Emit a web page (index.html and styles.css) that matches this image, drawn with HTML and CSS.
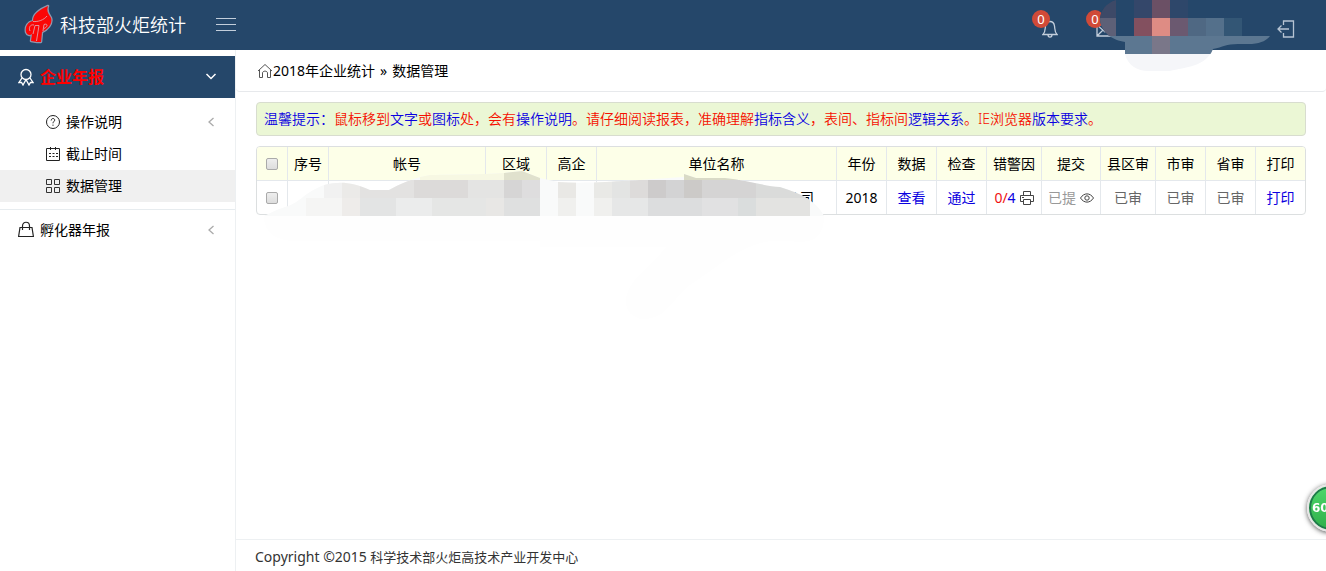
FILE: index.html
```html
<!DOCTYPE html>
<html lang="zh-CN">
<head>
<meta charset="utf-8">
<title>科技部火炬统计</title>
<link rel="stylesheet" href="styles.css">
</head>
<body>
<header class="topbar">
  <svg class="logo" viewBox="0 0 30 42" aria-hidden="true">
    <path fill="none" stroke="#8f98ae" stroke-width="2.500" stroke-linejoin="round" d="M24 2C15 6 9 10 9 17C4 18 1 22 2 28C3 31 6 32 8 30L7 37L13 38L17 38L18 28C23 26 29 20 27 14C25 10 22 8 24 2Z"/>
    <path fill="#fb0606" d="M24 2C15 6 9 10 9 17C4 18 1 22 2 28C3 31 6 32 8 30L7 37L13 38L17 38L18 28C23 26 29 20 27 14C25 10 22 8 24 2Z"/>
    <path fill="none" stroke="#dfa0aa" stroke-width=".9" d="M9 17.500C14 18 20 16 23 12M10 21C6 20 4.500 24 6 27M12.500 37L15 21.500H11L9 30M19 27L20 20.500C24 19 24 23 20 24.500"/>
  </svg>
  <h1 class="brand">科技部火炬统计</h1>
  <button class="icon-btn menu-btn" aria-label="菜单">
    <svg width="20" height="14" viewBox="0 0 20 14"><path d="M0 .5H20M0 6.500H20M0 12.500H20" stroke="#c3cedb" fill="none"/></svg>
  </button>
  <nav class="tools">
    <button class="icon-btn tool" aria-label="通知">
      <svg width="16" height="18" viewBox="0 0 16 18" fill="none" stroke="#c3cedb" stroke-width="1.300"><path d="M1 14.500C3.500 12 3 9 3.500 6C4 2.500 6 1.500 8 1.500S12 2.500 12.500 6C13 9 12.500 12 15 14.500ZM6 14.500C6 18 10 18 10 14.500"/></svg>
      <span class="badge">0</span>
    </button>
    <button class="icon-btn tool" aria-label="邮件">
      <svg width="18" height="18" viewBox="0 0 18 18" fill="none" stroke="#c3cedb" stroke-width="1.300"><path d="M1 5H17V16H1ZM1 5L9 12L17 5M1 16L7 10M17 16L11 10"/></svg>
      <span class="badge">0</span>
    </button>
    <button class="icon-btn exit" aria-label="退出">
      <svg width="18" height="18" viewBox="0 0 18 18" fill="none" stroke="#b7c4d3" stroke-width="1.300"><path d="M6.500 5V1H16.500V17H6.500V13M12 9H1M4.500 5.500L1 9L4.500 12.500"/></svg>
    </button>
  </nav>
  <svg class="mask-top" width="172" height="72" viewBox="1100 0 172 72" aria-hidden="true">
    <defs><clipPath id="c1"><path d="M1116 0C1106 3 1100 11 1100 20C1102 34 1113 40 1125 42V54C1128 66 1138 71 1148 71H1170C1185 67 1206 67 1213 49C1223 47 1226 44 1238 44H1252C1262 43 1267 40 1270 36H1242V0Z"/></clipPath></defs>
    <g clip-path="url(#c1)">
      <path fill="#25476a" d="M1100 0h172v36h-172z"/><path fill="#5c7791" d="M1100 36h172v18h-172z"/><path fill="#f5f6f9" d="M1100 54h172v18h-172z"/>
      <path fill="#3d4967" d="M1098 0h18v18h-18z"/><path fill="#34476a" d="M1134 0h18v18h-18z"/><path fill="#6b5065" d="M1152 0h18v18h-18z"/><path fill="#2e476a" d="M1170 0h18v18h-18z"/>
      <path fill="#5d6077" d="M1098 18h18v18h-18z"/><path fill="#83505f" d="M1134 18h18v18h-18z"/><path fill="#de8c84" d="M1152 18h18v18h-18z"/><path fill="#6b5970" d="M1170 18h18v18h-18z"/><path fill="#4f6883" d="M1188 18h36v18h-36z"/><path fill="#54708b" d="M1206 18h18v18h-18z"/><path fill="#335675" d="M1224 18h18v18h-18z"/>
      <path fill="#7a7789" d="M1152 36h18v18h-18z"/>
    </g>
  </svg>
</header>
<div class="shell">
  <aside class="sidebar">
    <a class="group active" href="#">
      <svg width="16" height="18" viewBox="0 0 16 18" fill="none" stroke="#fff" stroke-width="1.300"><circle cx="8" cy="6.500" r="5"/><path d="M4 10L1 14.500H3.500L5 17L7.500 12.500H8.500L11 17L12.500 14.500H15L12 10"/></svg>
      <span class="grow">企业年报</span>
      <svg width="12" height="12" viewBox="0 0 12 12" fill="none" stroke="#fff" stroke-width="1.500"><path d="M1.500 3L6 7.500L10.500 3"/></svg>
    </a>
    <ul class="submenu">
      <li><a class="item" href="#">
        <svg width="14" height="14" viewBox="0 0 14 14" fill="none" stroke="#222"><circle cx="7" cy="7" r="6.500"/><path d="M5.200 5.500C5.200 2.800 8.800 3 8.700 5.200C8.600 6.500 7 6.500 7 8.300M7 9.600V10.800"/></svg>
        <span class="grow">操作说明</span>
        <svg width="12" height="12" viewBox="0 0 12 12" fill="none" stroke="#aaa" stroke-width="1.300"><path d="M8.500 2L4 6L8.500 10"/></svg>
      </a></li>
      <li><a class="item" href="#">
        <svg width="14" height="14" viewBox="0 0 14 14" fill="none" stroke="#222"><path d="M.5 1.500H13.500V13.500H.5ZM4.500 0V3M9.500 0V3"/><path stroke-dasharray="2 1.500" d="M3 6.500H12M3 9.500H12"/></svg>
        <span class="grow">截止时间</span>
      </a></li>
      <li><a class="item current" href="#">
        <svg width="14" height="14" viewBox="0 0 14 14" fill="none" stroke="#333"><path d="M.5.500H5.500V5.500H.5ZM8.500.500H13.500V5.500H8.500ZM.5 8.500H5.500V13.500H.5ZM8.500 8.500H13.500V13.500H8.500Z"/></svg>
        <span class="grow">数据管理</span>
      </a></li>
    </ul>
    <a class="group" href="#">
      <svg width="16" height="18" viewBox="0 0 16 18" fill="none" stroke="#222" stroke-width="1.200"><path d="M2 6.500H14L15.400 15.500H.6ZM4.500 9V5C4.500 0 11.500 0 11.500 5V9"/></svg>
      <span class="grow">孵化器年报</span>
      <svg width="12" height="12" viewBox="0 0 12 12" fill="none" stroke="#aaa" stroke-width="1.300"><path d="M8.500 2L4 6L8.500 10"/></svg>
    </a>
  </aside>
  <div class="page">
    <nav class="crumbs">
      <svg width="16" height="16" viewBox="0 0 16 16" fill="none" stroke="#555"><path d="M1 8L8 1.500L15 8M2.500 7V14.500H5.500V10C5.500 7.500 10.500 7.500 10.500 10V14.500H13.500V7"/></svg>
      <span>2018年企业统计</span><span class="sep">»</span><span>数据管理</span>
    </nav>
    <main class="content">
      <p class="notice"><b>温馨提示：</b>鼠标移到<b>文字</b>或<b>图标</b>处，会有<b>操作说明</b>。请仔细阅读报表，准确理解<b>指标含义</b>，表间、指标间<b>逻辑关系</b>。IE浏览器<b>版本要求</b>。</p>
      <div class="table-wrap">
        <table class="grid">
          <colgroup><col class="w31"><col class="w41"><col class="w157"><col class="w61"><col class="w50"><col><col class="w50"><col class="w50"><col class="w50"><col class="w55"><col class="w59"><col class="w55"><col class="w50"><col class="w50"><col class="w49"></colgroup>
          <thead><tr><th><input class="tick" type="checkbox" aria-label="全选"></th><th>序号</th><th>帐号</th><th>区域</th><th>高企</th><th>单位名称</th><th>年份</th><th>数据</th><th>检查</th><th>错警因</th><th>提交</th><th>县区审</th><th>市审</th><th>省审</th><th>打印</th></tr></thead>
          <tbody><tr><td><input class="tick" type="checkbox" aria-label="选择"></td><td></td><td></td><td></td><td></td><td class="company">公司</td><td>2018</td><td><a href="#">查看</a></td><td><a href="#">通过</a></td>
            <td><span class="pair"><span><span class="err">0/</span><a href="#">4</a></span>
              <svg width="14" height="14" viewBox="0 0 14 14" fill="none" stroke="#444"><path d="M3.500 4.500V.5H10.500V4.500M3.500 10.500H.5V4.500H13.500V10.500H10.500M3.500 8.500H10.500V13.500H3.500ZM2 6.500H4"/></svg></span></td>
            <td><span class="pair soft">已提
              <svg width="14" height="14" viewBox="0 0 14 14" fill="none" stroke="#444"><path d="M.5 7C4 1.500 10 1.500 13.500 7C10 12.500 4 12.500.5 7Z"/><circle cx="7" cy="7" r="2.200"/></svg></span></td>
            <td class="done">已审</td><td class="done">已审</td><td class="done">已审</td><td><a href="#">打印</a></td></tr></tbody>
        </table>
        <svg class="mask-row" width="570" height="150" viewBox="260 170 570 150" aria-hidden="true">
          <path fill="#fefefe" d="M264 216H824C824 240 810 244 790 241C750 236 725 262 690 285C670 302 665 320 642 319C620 315 620 290 645 270C655 260 664 250 666 247H540V241H300Q264 242 264 216Z"/>
          <defs><clipPath id="c2"><path d="M264 216Q280 208 288 206C300 202 304 193 324 185C340 181 352 182 370 190H389C400 184 412 178 430 175L485 174L504 173L522 171L540 178L558 182C590 184 620 181 684 177V174L696 178H725C745 180 765 186 780 187C803 194 817 202 824 216Z"/></clipPath></defs>
          <g clip-path="url(#c2)">
            <path fill="#f9fafa" d="M260 170h570v46H260z"/>
            <path fill="#f7f8e3" d="M420 170h84v10h-84z"/><path fill="#e0e1cd" d="M504 170h36v10h-36z"/><path fill="#d9dac6" d="M684 170h54v10h-54z"/>
            <path fill="#f1f1f1" d="M324 180h18v18h-18z"/><path fill="#ebeae8" d="M342 180h18v18h-18z"/><path fill="#e3e2e1" d="M360 180h54v18h-54z"/><path fill="#dcdad9" d="M414 180h54v18h-54z"/><path fill="#e4e4e3" d="M468 180h36v18h-36z"/><path fill="#d6d5d5" d="M504 180h18v18h-18z"/><path fill="#deddde" d="M522 180h18v18h-18z"/>
            <path fill="#e9e8e5" d="M558 180h18v18h-18z"/><path fill="#e9e9e6" d="M594 180h18v18h-18z"/><path fill="#e3e4e3" d="M612 180h18v18h-18z"/><path fill="#dddbda" d="M630 180h18v18h-18z"/><path fill="#cdcbcb" d="M648 180h18v18h-18z"/><path fill="#d3d3d4" d="M666 180h18v18h-18z"/><path fill="#cccac8" d="M684 180h18v18h-18z"/><path fill="#d5d4d4" d="M702 180h54v18h-54z"/><path fill="#dadbda" d="M756 180h54v18h-54z"/>
            <path fill="#f5f5f4" d="M306 198h36v18h-36z"/><path fill="#eeecea" d="M342 198h18v18h-18z"/><path fill="#e3e4e4" d="M360 198h36v18h-36z"/><path fill="#ebecec" d="M396 198h36v18h-36z"/><path fill="#e5e6e5" d="M432 198h54v18h-54z"/><path fill="#e8e7e5" d="M486 198h18v18h-18z"/><path fill="#dfe0e0" d="M504 198h36v18h-36z"/>
            <path fill="#f0f0ee" d="M558 198h18v18h-18z"/><path fill="#f0f0ee" d="M594 198h18v18h-18z"/><path fill="#e6e7e7" d="M612 198h36v18h-36z"/><path fill="#dcddde" d="M648 198h54v18h-54z"/><path fill="#e1e1e2" d="M702 198h36v18h-36z"/><path fill="#dadddd" d="M738 198h18v18h-18z"/><path fill="#e3e3e1" d="M756 198h54v18h-54z"/>
          </g>
        </svg>
      </div>
    </main>
    <footer class="footer"><span class="latin">Copyright ©2015</span> 科学技术部火炬高技术产业开发中心</footer>
  </div>
</div>
<div class="ball">60</div>
</body>
</html>
```
FILE: styles.css
```css
* { box-sizing: border-box; }
body {
  margin: 0;
  min-height: 100vh;
  display: flex;
  flex-direction: column;
  overflow-x: hidden;
  background: #fff;
  color: #000;
  font: 14px/20px "Noto Sans", "Noto Sans CJK SC", sans-serif;
}
svg { display: block; flex: none; }
a { color: #0a00e0; text-decoration: none; }

.topbar {
  position: relative;
  display: flex;
  align-items: center;
  height: 50px;
  padding: 0 31px 0 24px;
  background: #25476a;
}
.logo { width: 30px; height: 42px; }
.brand {
  margin: 0 30px 0 6px;
  color: #fff;
  font-size: 18px;
  font-weight: 350;
  line-height: 24px;
}
.icon-btn { padding: 0; border: 0; background: none; }
.tools { display: flex; align-items: center; margin-left: auto; padding-top: 8px; }
.tool { position: relative; margin-right: 38px; }
.exit { margin-left: 125px; }
.badge {
  position: absolute;
  top: -10px;
  left: -10px;
  width: 18px;
  height: 18px;
  border-radius: 50%;
  background: #d04a38;
  color: #fff;
  font: 13px/18px "Noto Sans", sans-serif;
  text-align: center;
}
.mask-top { position: absolute; top: 0; right: 54px; z-index: 2; }

.shell { display: flex; flex: 1; }
.sidebar { width: 236px; flex: none; padding-top: 6px; border-right: 1px solid #edf0f2; }
.group {
  display: flex;
  align-items: center;
  gap: 6px;
  height: 40px;
  padding: 0 18px;
  border-top: 1px solid #e7ecef;
  color: #000;
}
.group.active {
  height: 42px;
  border: 0;
  background: #25476a;
  color: #f00;
  font-size: 16px;
  font-weight: 700;
}
.grow { flex: 1; }
.submenu { margin: 0; padding: 8px 0 7px; list-style: none; }
.item {
  display: flex;
  align-items: center;
  gap: 6px;
  height: 32px;
  padding: 0 18px 0 46px;
  color: #000;
}
.item.current { background: #f0f0f0; }

.page { display: flex; flex: 1; flex-direction: column; min-width: 0; }
.crumbs {
  display: flex;
  align-items: center;
  height: 42px;
  padding: 0 21px;
  border-bottom: 1px solid #e7e9ec;
  border-radius: 0 0 4px 4px;
}
.sep { margin: 0 5px; }
.content { flex: 1; padding: 10px 20px; }
.notice {
  margin: 0 0 10px;
  padding: 6px 7px;
  border: 1px solid #d8ddcf;
  border-radius: 4px;
  background: #ebf7d5;
  color: #f51000;
  font-weight: 350;
}
.notice b { color: #0a00e0; font-weight: 350; }

.table-wrap { position: relative; }
.grid {
  width: 100%;
  table-layout: fixed;
  border: 1px solid #dcdfe0;
  border-radius: 4px;
  border-spacing: 0;
  overflow: hidden;
}
.grid th, .grid td {
  height: 33px;
  padding: 0;
  border-right: 1px solid #e4e8ec;
  font-weight: 400;
  text-align: center;
  white-space: nowrap;
}
.grid th { height: 34px; border-bottom: 1px solid #e4e8ec; background: #fdffe8; }
.grid th:last-child, .grid td:last-child { border-right: 0; }
.grid .company { padding-right: 22px; text-align: right; }
.grid .done { color: #666; }
.w31 { width: 31px; }
.w41 { width: 41px; }
.w49 { width: 49px; }
.w50 { width: 50px; }
.w55 { width: 55px; }
.w59 { width: 59px; }
.w61 { width: 61px; }
.w157 { width: 157px; }
.tick {
  appearance: none;
  display: block;
  width: 12px;
  height: 12px;
  margin: 0 auto;
  border: 1px solid #aaa;
  border-radius: 2px;
  background: linear-gradient(#eee, #ddd);
}
.pair { display: flex; align-items: center; justify-content: center; gap: 4px; }
.soft { color: #999; }
.err { color: #f01010; }
.mask-row { position: absolute; top: 24px; left: 4px; }

.footer {
  height: 32px;
  padding: 7px 19px;
  border-top: 1px solid #edf0f2;
  color: #333;
  font-size: 13px;
}
.latin { font-size: 14px; }
.ball {
  position: fixed;
  right: -29px;
  bottom: 39px;
  width: 48px;
  height: 48px;
  padding-left: 3px;
  border: 2px solid #e6e6e6;
  border-radius: 50%;
  background: linear-gradient(#4fd86c, #2fae4a);
  box-shadow: inset 0 0 0 2px #1f7a4a, 0 1px 5px #555;
  color: #fff;
  font: bold 12px/44px "DejaVu Sans", sans-serif;
}
```
